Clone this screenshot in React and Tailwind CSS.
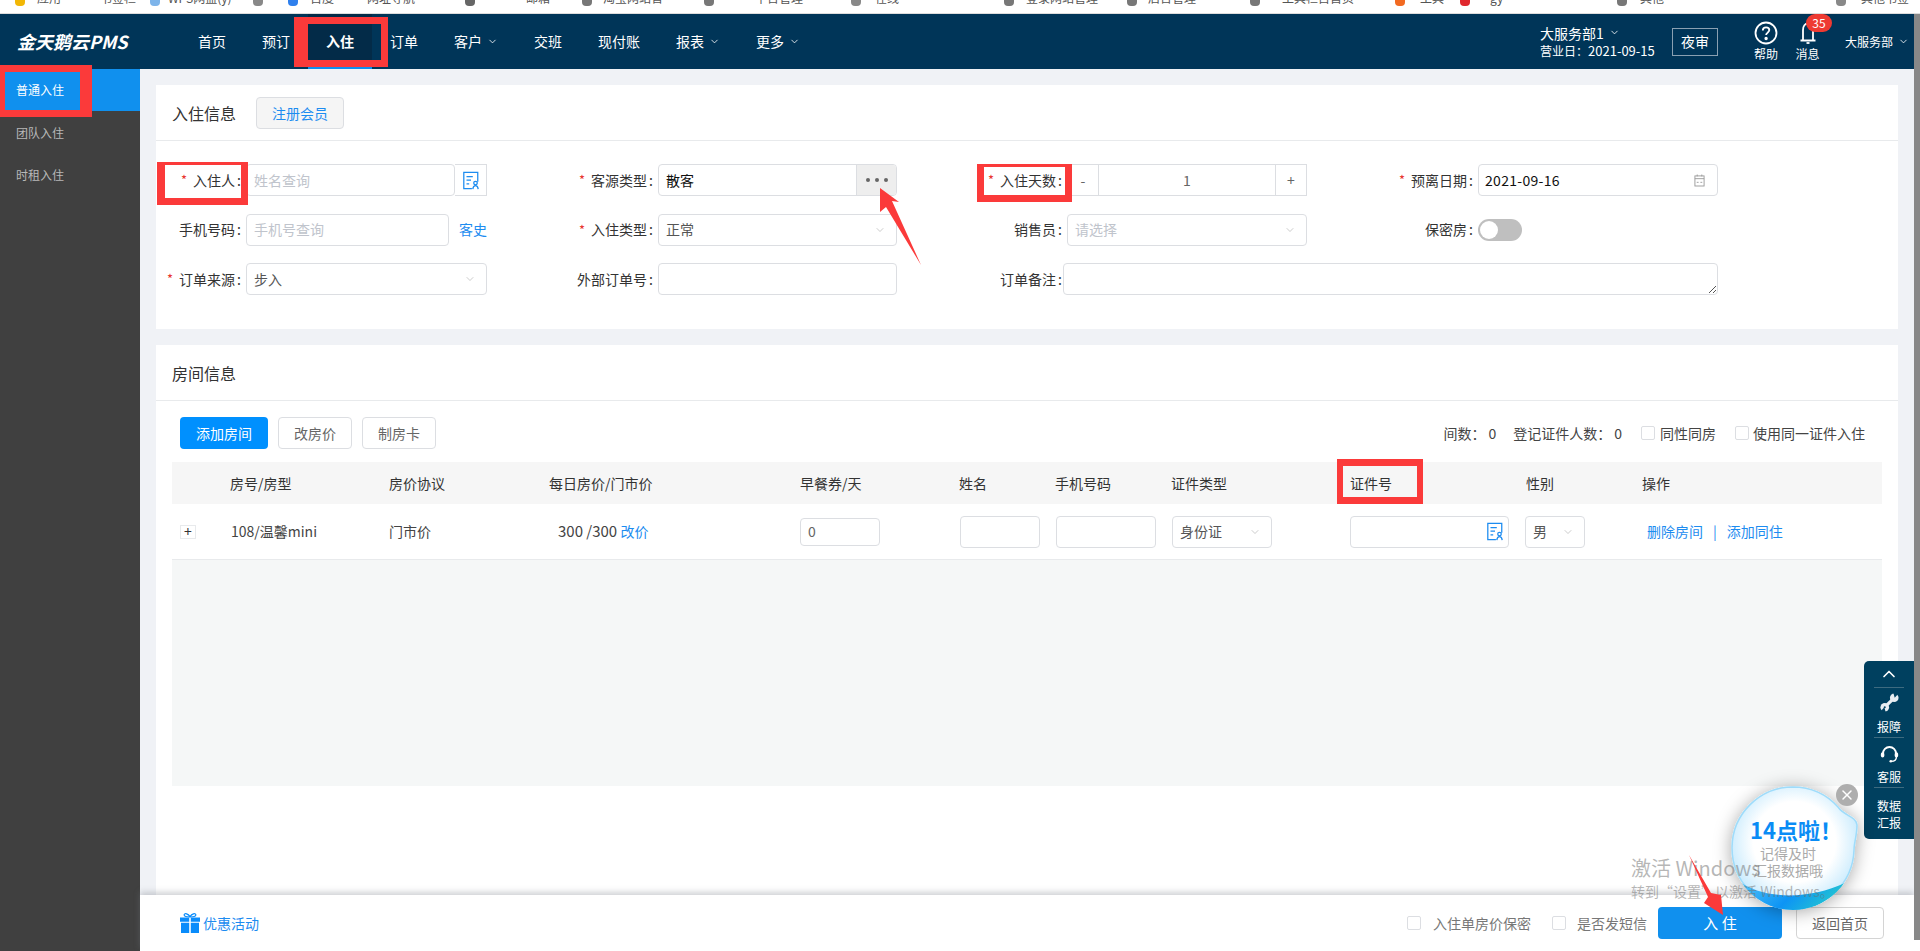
import React from "react";
import { ChevronDown, ChevronUp, X } from "lucide-react";

const IdIcon = ({ className }) => (
  <svg viewBox="0 0 20 22" fill="none" stroke="#1d8cf0" strokeWidth="1.4" preserveAspectRatio="none" className={className}>
    <path d="M11 20.500H2V1.500h15.500v11" />
    <path d="M5 6.500h7M5 10.500h5M5 15h3" />
    <circle cx="15" cy="14" r="2" />
    <path d="M12 21c.3-2.500 1.400-4 3-4s2.700 1.500 3 4" />
  </svg>
);

const Chev = () => <ChevronDown size={12} strokeWidth={1.2} className="text-[#aaaaaa]" />;
const NavChev = () => <ChevronDown size={11} strokeWidth={1.8} className="ml-[5px] text-white" />;

const Label = ({ star, children }) => (
  <div className="flex h-[32px] items-center justify-end pr-[5px] text-[14px] text-[#333333]">
    {star && <span className="mr-[6px] text-[13px] text-[#e8342f]">*</span>}
    {children}<span className="ml-[2px]">:</span>
  </div>
);

const Box = ({ className = "", children }) => (
  <div className={`flex items-center rounded-[4px] border border-[#dcdee2] bg-white text-[14px] ${className}`}>{children}</div>
);

const Select = ({ value, placeholder, className = "w-full h-[32px]" }) => (
  <Box className={`justify-between pl-[7px] pr-[10px] ${className}`}>
    <span className={placeholder ? "text-[#c0c4cc]" : "text-[#555555]"}>{value || placeholder}</span>
    <Chev />
  </Box>
);

const NavItem = ({ children, chev, active }) => (
  <div className={`flex h-full items-center px-[18px] text-[14px] text-white ${active ? "border-b-[3px] border-[#0f8fee] bg-[#032b48] pt-[3px]" : ""}`}>
    {children}
    {chev && <NavChev />}
  </div>
);

const Check = () => <span className="block h-[14px] w-[14px] rounded-[2px] border border-[#dcdee2] bg-white" />;

const Marker = ({ className }) => <div className={`pointer-events-none absolute border-[#fb3a3a] ${className}`} />;

const strip = [
  [37, "应用"], [100, "书签栏"], [168, "WPS网盘(y)"], [310, "百度"], [367, "网址导航"], [526, "邮箱"],
  [603, "淘宝网站官"], [755, "平台管理"], [875, "在线"], [1026, "登录网站管理"], [1148, "后台管理"],
  [1282, "工具栏目首页"], [1420, "工具"], [1490, "gy"], [1640, "其他"], [1861, "其他书签"],
];
const dots = [
  [15, "#f2b705"], [150, "#7db4ea"], [253, "#888888"], [288, "#2f80ed"], [465, "#666666"], [582, "#777777"], [704, "#777777"],
  [851, "#888888"], [1004, "#777777"], [1127, "#777777"], [1250, "#777777"], [1395, "#f26a21"], [1460, "#e0282e"], [1617, "#777777"], [1836, "#888888"],
];

const ROWCOLS = "grid-cols-[58px_159px_160px_251px_159px_96px_116px_179px_176px_116px_240px]";

export default function App() {
  return (
    <div className="relative flex h-[951px] w-[1920px] flex-col overflow-hidden bg-white font-['Noto_Sans_CJK_SC','Liberation_Sans',sans-serif] leading-normal">
      <div className="relative h-[14px] shrink-0 overflow-hidden border-b border-[#dddddd] bg-white">
        {strip.map(([x, t], i) => (
          <span key={i} className="absolute top-[-9px] whitespace-nowrap text-[12px] leading-[14px] text-[#555555]" style={{ left: x }}>{t}</span>
        ))}
        {dots.map(([x, c], i) => (
          <span key={i} className="absolute top-0 h-[6px] w-[10px] rounded-b-[4px]" style={{ left: x, backgroundColor: c }} />
        ))}
      </div>

      <div className="flex min-h-0 flex-1">
        <div className="flex w-[1914px] flex-col">
          <header className="flex h-[55px] shrink-0 items-stretch bg-[#003558] text-white">
            <div className="flex w-[180px] items-center pl-[17px] text-[18px] font-bold italic">金天鹅云PMS</div>
            <NavItem>首页</NavItem>
            <NavItem>预订</NavItem>
            <NavItem active><span className="font-bold">入住</span></NavItem>
            <NavItem>订单</NavItem>
            <NavItem chev>客户</NavItem>
            <NavItem>交班</NavItem>
            <NavItem>现付账</NavItem>
            <NavItem chev>报表</NavItem>
            <NavItem chev>更多</NavItem>
            <div className="ml-auto flex items-center">
              <div className="w-[132px]">
                <div className="flex items-center text-[14px] leading-[18px]">大服务部1<NavChev /></div>
                <div className="text-[12px] leading-[18px]">营业日：<span className="text-[13px]">2021-09-15</span></div>
              </div>
              <div className="flex h-[28px] w-[46px] items-center justify-center border border-[#8aa0b2] text-[14px]">夜审</div>
              <div className="ml-[36px] flex w-[24px] flex-col items-center">
                <svg viewBox="0 0 24 24" fill="none" stroke="white" strokeWidth="1.8" className="h-[24px] w-[24px]">
                  <circle cx="12" cy="12" r="10.500" />
                  <path d="M8.800 9.500c0-2 1.400-3.200 3.300-3.200s3.200 1.200 3.200 2.800c0 2.400-3.200 2.600-3.200 5" />
                  <circle cx="12.100" cy="17.500" r="0.800" fill="white" />
                </svg>
                <span className="text-[12px] leading-[18px]">帮助</span>
              </div>
              <div className="relative ml-[17px] flex w-[25px] flex-col items-center">
                <svg viewBox="0 0 24 24" fill="none" stroke="white" strokeWidth="1.8" className="h-[24px] w-[24px]">
                  <path d="M7 19V9c0-4 2-6.500 5-6.500s5 2.500 5 6.500v10M4.500 19.500h15" />
                  <path d="M10.500 22h3" />
                </svg>
                <span className="text-[12px] leading-[18px]">消息</span>
                <span className="absolute -right-[12px] -top-[7px] flex h-[18px] w-[26px] items-center justify-center rounded-full bg-[#ee3a32] text-[12px] leading-none">35</span>
              </div>
              <div className="ml-[25px] flex w-[69px] items-center text-[12px]">大服务部<NavChev /></div>
            </div>
          </header>

          <div className="flex min-h-0 flex-1">
            <aside className="w-[140px] shrink-0 bg-[#404040] pt-px text-[12px] text-[#b8b8b8]">
              <div className="-mt-px flex h-[42px] items-center bg-[#1090ee] pl-[16px] text-white">普通入住</div>
              <div className="flex h-[42px] items-center pl-[16px] pt-px">团队入住</div>
              <div className="flex h-[42px] items-center pl-[16px] pt-px">时租入住</div>
            </aside>

            <div className="flex min-w-0 flex-1 flex-col">
              <main className="min-h-0 flex-1 overflow-hidden bg-[#f0f2f6] pl-[16px] pr-[16px] pt-[16px]">
                <section className="h-[244px] bg-white">
                  <div className="flex h-[56px] items-center border-b border-[#e8eaec] pl-[16px] pt-px">
                    <span className="text-[16px] text-[#333333]">入住信息</span>
                    <button className="ml-[20px] h-[32px] w-[88px] rounded-[4px] border border-[#dcdee2] bg-[#f5f5f5] text-[14px] text-[#1d8cf0]">注册会员</button>
                  </div>
                  <div className="grid grid-cols-[90px_241px_171px_239px_170px_240px_171px_240px] gap-y-[17.5px] pt-[23px]">
                    <Label star>入住人</Label>
                    <div className="flex h-[32px]">
                      <Box className="h-[32px] flex-1 pl-[7px] text-[#c0c4cc]">姓名查询</Box>
                      <div className="flex h-[32px] w-[32px] items-center justify-center border-y border-r border-[#dcdee2]">
                        <IdIcon className="h-[19px] w-[18px]" />
                      </div>
                    </div>
                    <Label star>客源类型</Label>
                    <Box className="h-[32px] overflow-hidden pl-[7px] text-[#111111]">
                      <span className="flex-1">散客</span>
                      <span className="flex h-full w-[40px] items-center justify-center gap-[5px] border-l border-[#dcdee2] bg-[#eeeeee]">
                        <i className="h-[4px] w-[4px] rounded-full bg-[#666666]" />
                        <i className="h-[4px] w-[4px] rounded-full bg-[#666666]" />
                        <i className="h-[4px] w-[4px] rounded-full bg-[#666666]" />
                      </span>
                    </Box>
                    <Label star>入住天数</Label>
                    <div className="flex h-[32px] items-stretch border border-[#dcdee2] text-[14px] text-[#666666]">
                      <span className="flex w-[31px] items-center justify-center border-r border-[#dcdee2]">-</span>
                      <span className="flex flex-1 items-center justify-center">1</span>
                      <span className="flex w-[31px] items-center justify-center border-l border-[#dcdee2]">+</span>
                    </div>
                    <Label star>预离日期</Label>
                    <Box className="h-[32px] justify-between pl-[6px] pr-[12px] text-[#111111]">
                      <span className="tracking-[0.3px]">2021-09-16</span>
                      <svg viewBox="0 0 12 14" fill="none" stroke="#999999" className="h-[13px] w-[11px]">
                        <rect x="1" y="2" width="10" height="11" />
                        <path d="M1 5h10M3.500 .5v2M8.500 .5v2M3 9h2M7 9h2" />
                      </svg>
                    </Box>

                    <Label>手机号码</Label>
                    <div className="flex h-[32px] items-center">
                      <Box className="h-[32px] w-[203px] pl-[7px] text-[#c0c4cc]">手机号查询</Box>
                      <span className="ml-[10px] text-[14px] text-[#1d8cf0]">客史</span>
                    </div>
                    <Label star>入住类型</Label>
                    <Select value="正常" />
                    <Label>销售员</Label>
                    <Select placeholder="请选择" />
                    <Label>保密房</Label>
                    <div className="flex h-[32px] items-center">
                      <div className="flex h-[22px] w-[44px] items-center rounded-full bg-[#bfbfbf] pl-[2px]">
                        <span className="h-[18px] w-[18px] rounded-full bg-white" />
                      </div>
                    </div>

                    <Label star>订单来源</Label>
                    <Select value="步入" />
                    <Label>外部订单号</Label>
                    <Box className="h-[32px]" />
                    <Label>订单备注</Label>
                    <div className="relative col-span-3 -ml-[4px] h-[32px] rounded-[4px] border border-[#dcdee2] bg-white">
                      <svg viewBox="0 0 8 8" stroke="#555555" className="absolute bottom-px right-px h-[8px] w-[8px]">
                        <path d="M1 8L8 1M5 8l3-3" />
                      </svg>
                    </div>
                  </div>
                </section>

                <section className="mt-[16px] h-[600px] bg-white pl-[16px] pr-[16px]">
                  <div className="-mx-[16px] flex h-[56px] items-center border-b border-[#e8eaec] pl-[16px] text-[16px] text-[#333333]">房间信息</div>
                  <div className="mt-[16px] flex h-[32px] items-center pl-[8px] text-[14px]">
                    <button className="h-[32px] w-[88px] rounded-[4px] bg-[#0090fe] text-white">添加房间</button>
                    <button className="ml-[10px] h-[32px] w-[74px] rounded-[4px] border border-[#dcdee2] text-[#666666]">改房价</button>
                    <button className="ml-[10px] h-[32px] w-[74px] rounded-[4px] border border-[#dcdee2] text-[#666666]">制房卡</button>
                    <div className="ml-auto flex items-center pr-[17px] text-[#444444]">
                      <span>间数：</span><span className="ml-[3px]">0</span>
                      <span className="ml-[17px]">登记证件人数：</span><span className="ml-[3px]">0</span>
                      <span className="ml-[19px]"><Check /></span><span className="ml-[5px]">同性同房</span>
                      <span className="ml-[19px]"><Check /></span><span className="ml-[4px]">使用同一证件入住</span>
                    </div>
                  </div>
                  <div className={`mt-[13px] grid h-[42px] items-center bg-[#f6f6f6] text-[14px] text-[#333333] ${ROWCOLS}`}>
                    <span />
                    <span>房号/房型</span>
                    <span>房价协议</span>
                    <span>每日房价/门市价</span>
                    <span>早餐券/天</span>
                    <span>姓名</span>
                    <span>手机号码</span>
                    <span>证件类型</span>
                    <span>证件号</span>
                    <span>性别</span>
                    <span>操作</span>
                  </div>
                  <div className={`grid h-[56px] items-center border-b border-[#e8eaec] text-[14px] text-[#444444] ${ROWCOLS}`}>
                    <span className="ml-[8px] flex h-[14px] w-[16px] items-center justify-center border border-[#e8eaec] text-[#333333]">+</span>
                    <span className="pl-[1px]">108/温馨mini</span>
                    <span>门市价</span>
                    <span className="pl-[9px] text-[15px]">300 /300 <span className="text-[14px] text-[#1d8cf0]">改价</span></span>
                    <span><Box className="h-[28px] w-[80px] pl-[7px] text-[12px] text-[#666666]">0</Box></span>
                    <span><Box className="ml-px h-[32px] w-[80px]" /></span>
                    <span><Box className="ml-px h-[32px] w-[100px]" /></span>
                    <span><Select value="身份证" className="ml-px h-[32px] w-[100px]" /></span>
                    <span>
                      <Box className="h-[32px] w-[159px] justify-end pr-[4px]">
                        <IdIcon className="h-[19px] w-[18px]" />
                      </Box>
                    </span>
                    <span><Select value="男" className="-ml-px h-[32px] w-[60px]" /></span>
                    <span className="whitespace-nowrap pl-[5px] text-[14px] text-[#1d8cf0]">删除房间<span className="mx-[10px]">|</span>添加同住</span>
                  </div>
                  <div className="h-[226px] bg-[#f5f7f7]" />
                </section>
              </main>

              <footer className="flex h-[56px] shrink-0 items-center bg-white pl-[40px] pr-[30px] text-[14px] shadow-[0_-3px_6px_rgba(120,125,135,0.35)]">
                <svg viewBox="0 0 20 20" fill="#0a8cfb" className="h-[20px] w-[20px]">
                  <path d="M0 4.500h9.200v4.200H0zM10.800 4.500H20v4.200h-9.200zM1 9.800h8.200V20H1zM10.800 9.800H19V20h-8.200z" />
                  <path d="M9.500 4C7 4 3.800 3.600 4.200 1.600 4.700-.300 8.200 1 10 3.600 11.800 1 15.300-.300 15.800 1.600 16.200 3.600 13 4 10.500 4z" fill="none" stroke="#0a8cfb" strokeWidth="1.200" />
                </svg>
                <span className="ml-[3px] text-[#1d8cf0]">优惠活动</span>
                <div className="ml-auto flex items-center text-[#777777]">
                  <Check />
                  <span className="ml-[12px]">入住单房价保密</span>
                  <span className="ml-[21px]"><Check /></span>
                  <span className="ml-[11px]">是否发短信</span>
                  <button className="ml-[11px] h-[32px] w-[124px] rounded-[4px] bg-[#1090ee] text-[15px] text-white">入 住</button>
                  <button className="ml-[14px] h-[32px] w-[88px] rounded-[4px] border border-[#d4d4d4] bg-white text-[14px] text-[#666666]">返回首页</button>
                </div>
              </footer>
            </div>
          </div>
        </div>
        <div className="flex w-[6px] flex-col bg-white">
          <div className="h-[926px] bg-[#888888]" />
        </div>
      </div>

      {/* annotations */}
      <Marker className="left-[294px] top-[17px] h-[50px] w-[94px] border-y-[7px] border-l-[14px] border-r-[7px]" />
      <Marker className="left-0 top-[65px] h-[52px] w-[92px] border-y-[7px] border-l-[5px] border-r-[12px]" />
      <Marker className="left-[157px] top-[162px] h-[43px] w-[91px] border-b-[7px] border-l-[8px] border-r-[7px] border-t-[3px]" />
      <Marker className="left-[977px] top-[164px] h-[38px] w-[95px] border-b-[7px] border-l-[7px] border-r-[7px] border-t-[3px]" />
      <Marker className="left-[1337px] top-[459px] h-[45px] w-[86px] border-x-[6px] border-y-[7px]" />

      {/* floating side panel */}
      <div className="absolute left-[1864px] top-[661px] flex h-[178px] w-[50px] flex-col items-center rounded-l-[5px] bg-[#00405f] text-[12px] leading-[17px] text-white">
        <div className="flex h-[27px] w-[30px] items-center justify-center border-b border-[#3d6b80]">
          <ChevronUp size={20} strokeWidth={2} />
        </div>
        <div className="flex h-[50px] w-[30px] flex-col items-center justify-end border-b border-[#3d6b80] pb-[2px]">
          <svg viewBox="0 0 22 22" className="mb-[6px] h-[19px] w-[19px]">
            <path d="M5 17L17 5" stroke="#e8eef2" strokeWidth="3.600" />
            <circle cx="16.500" cy="5.500" r="5" fill="#e8eef2" />
            <circle cx="5.500" cy="16.500" r="5" fill="#e8eef2" />
            <path d="M17 5.500L22 0h-6.500zM5 16.500L0 22h6.500z" fill="#00405f" />
            <circle cx="5.500" cy="16.500" r="1.200" fill="#00405f" />
          </svg>
          报障
        </div>
        <div className="flex h-[50px] w-[30px] flex-col items-center justify-end border-b border-[#3d6b80] pb-[2px]">
          <svg viewBox="0 0 22 22" fill="none" className="mb-[5px] h-[19px] w-[19px]">
            <path d="M3.500 11a7.500 7.500 0 0 1 15 0" stroke="white" strokeWidth="2.200" />
            <rect x="1" y="9.500" width="4" height="6" rx="2" fill="white" />
            <rect x="17" y="9.500" width="4" height="6" rx="2" fill="white" />
            <path d="M19 15c0 3.500-3 5-6 5" stroke="white" strokeWidth="1.600" />
            <circle cx="12.500" cy="20" r="1.500" fill="white" />
          </svg>
          客服
        </div>
        <div className="pt-[9px] text-center">数据<br />汇报</div>
      </div>

      {/* promo bubble */}
      <div className="absolute left-[1720px] top-[775px] h-[145px] w-[150px]">
        <svg viewBox="0 0 150 145" className="absolute inset-0 h-full w-full overflow-visible">
          <defs>
            <radialGradient id="bub" cx="50%" cy="45%" r="55%">
              <stop offset="60%" stopColor="#ffffff" />
              <stop offset="100%" stopColor="#c4e9fd" />
            </radialGradient>
            <linearGradient id="wave" x1="0" y1="0" x2="1" y2="0.300">
              <stop offset="0%" stopColor="#57c8f8" />
              <stop offset="60%" stopColor="#0d94f5" />
              <stop offset="100%" stopColor="#22c3d2" />
            </linearGradient>
            <filter id="sh" x="-30%" y="-30%" width="160%" height="160%">
              <feDropShadow dx="0" dy="2" stdDeviation="9" floodColor="#000000" floodOpacity="0.35" />
            </filter>
            <clipPath id="cl"><circle cx="73" cy="73" r="62" /></clipPath>
          </defs>
          <path d="M73 12A61 61 0 0 1 118 32C124 41 136 41 137 50C137 60 134 68 134 75A61 61 0 1 1 73 12Z" fill="url(#bub)" stroke="#9edcfb" strokeWidth="1.500" filter="url(#sh)" />
          <path d="M17 105C45 126 90 124 125 108C112 125 92 136 73 136C50 136 30 124 17 105Z" fill="url(#wave)" clipPath="url(#cl)" />
        </svg>
        <div className="absolute left-[30px] top-[40px] whitespace-nowrap text-[22px] font-bold leading-[28px] text-[#0a8cf5]">14点啦！</div>
        <div className="absolute left-[33px] top-[70px] w-[70px] text-center text-[14px] leading-[17px] text-[#aaaaaa]">记得及时<br />汇报数据哦</div>
      </div>
      <div className="absolute left-[1836px] top-[784px] flex h-[22px] w-[22px] items-center justify-center rounded-full bg-[#aeaeae] text-white">
        <X size={16} strokeWidth={2.200} />
      </div>

      {/* activation watermark */}
      <div className="pointer-events-none absolute left-[1631px] top-[855px] text-[rgba(110,110,110,0.5)]">
        <div className="text-[20px] leading-[26px]">激活 Windows</div>
        <div className="text-[14px] leading-[20px]">转到“设置”以激活 Windows。</div>
      </div>

      <svg viewBox="0 0 1920 951" className="pointer-events-none absolute left-0 top-0 h-[951px] w-[1920px]">
        <path d="M880 188L899 202L892 201L921 265L886 207L880 212Z" fill="#fb3a3a" />
        <path d="M1689 855L1711 893L1721 895L1723 915L1704 903L1708 897Z" fill="#fb3a3a" />
      </svg>
    </div>
  );
}
